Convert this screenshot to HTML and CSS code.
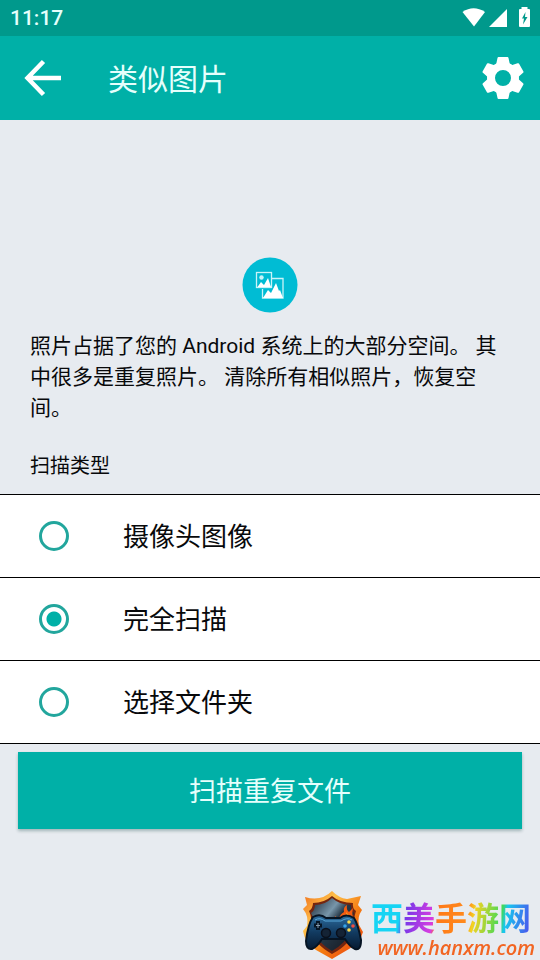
FILE: index.html
```html
<!DOCTYPE html>
<html lang="zh-CN">
    <head>
        <meta charset="utf-8">
        <meta name="viewport" content="width=device-width, initial-scale=1">
        <link rel="stylesheet" href="styles.css">

        <title>类似图片</title>
    </head>

    <body>
        <div class="status">
            <span>11:17</span>
            <svg class="status-icons" width="68" height="22" viewBox="0 0 68 22" fill="white">
                <path d="M0.500 5Q11.500-2.500 23 5L12 19.500Z"/>
                <path d="M45 2V20H27Z"/>
                <path fill-rule="evenodd" d="M59.500 0H65.500V2H67Q68 2 68 3V19Q68 20 67 20H58Q57 20 57 19V3Q57 2 58 2H59.500ZM63.500 5L60 11.500H62L61 17.500L65.500 10H63Z"/>
            </svg>
        </div>

        <header class="bar">
            <button class="icon-button" aria-label="返回">
                <svg width="38" height="38" viewBox="0 0 38 38" fill="none" stroke="white" stroke-width="4.500">
                    <path d="M37 19H5M19.500 2.500L3.500 19L19.500 35.500"/>
                </svg>
            </button>
            <h1 class="title">类似图片</h1>
            <button class="icon-button" aria-label="设置">
                <svg width="42" height="42" viewBox="0 0 42 42" fill="white">
                    <defs>
                        <path id="tooth" d="M14 8L15.500 1Q15.700 0 16.500 0H25.500Q26.300 0 26.500 1L28 8Z"/>
                    </defs>
                    <circle cx="21" cy="21" r="12" fill="none" stroke="white" stroke-width="8"/>
                    <use href="#tooth"/>
                    <use href="#tooth" transform="rotate(60 21 21)"/>
                    <use href="#tooth" transform="rotate(120 21 21)"/>
                    <use href="#tooth" transform="rotate(180 21 21)"/>
                    <use href="#tooth" transform="rotate(240 21 21)"/>
                    <use href="#tooth" transform="rotate(300 21 21)"/>
                </svg>
            </button>
        </header>

        <main>
            <section class="intro">
                <svg class="photos" width="56" height="56" viewBox="0 0 56 56">
                    <circle cx="28" cy="28" r="27.500" fill="#00bcd4"/>
                    <path d="M30 21.500H41V41H20.500V32" fill="none" stroke="#c9f3f8" stroke-width="1.300"/>
                    <path d="M21 41L26 33L29 36L34 26L37 34L38 33L41 41Z" fill="white"/>
                    <rect x="14.500" y="15.500" width="15" height="15" fill="#00bcd4" stroke="#c9f3f8" stroke-width="1.300"/>
                    <circle cx="19.500" cy="20.500" r="2.200" fill="#c9f3f8"/>
                    <path d="M15.500 30L19 25L22 28L26 21L29 30Z" fill="white"/>
                </svg>
                <p class="text">照片占据了您的 Android 系统上的大部分空间。 其中很多是重复照片。 清除所有相似照片，恢复空间。</p>
            </section>

            <form>
                <fieldset class="types">
                    <legend class="label">扫描类型</legend>
                    <label class="option"><input type="radio" name="type"><span>摄像头图像</span></label>
                    <label class="option"><input type="radio" name="type" checked><span>完全扫描</span></label>
                    <label class="option"><input type="radio" name="type"><span>选择文件夹</span></label>
                </fieldset>
                <button type="button" class="scan">扫描重复文件</button>
            </form>
        </main>

        <div class="watermark">
            <svg width="64" height="70" viewBox="0 0 64 70">
                <defs>
                    <linearGradient id="fire" x1="0" y1="0" x2="1" y2="1">
                        <stop offset="0" stop-color="#ef6a16"/>
                        <stop offset=".3" stop-color="#ffc04a"/>
                        <stop offset=".6" stop-color="#f47b12"/>
                        <stop offset="1" stop-color="#e83b10"/>
                    </linearGradient>
                    <linearGradient id="steel" x1="0" y1="0" x2="1" y2="1">
                        <stop offset="0" stop-color="#172331"/>
                        <stop offset=".35" stop-color="#7896aa"/>
                        <stop offset=".5" stop-color="#263746"/>
                        <stop offset="1" stop-color="#14171e"/>
                    </linearGradient>
                    <linearGradient id="pad" x1="0" y1="0" x2="0" y2="1">
                        <stop offset="0" stop-color="#2d6c9d"/>
                        <stop offset=".5" stop-color="#123b61"/>
                        <stop offset="1" stop-color="#071a31"/>
                    </linearGradient>
                </defs>
                <path d="M31 1Q38 8 46 9L60 6L57 15L61 20Q56 27 58 35L62 42Q59 53 48 59L31 69L15 60Q4 53 2 41L6 36Q8 26 2 19L6 15L4 7Q20 12 31 1Z" fill="url(#fire)"/>
                <path d="M31 6Q39 13 52 13Q51 18 55 21Q52 29 54 39Q50 54 31 64Q13 54 9 39Q12 29 8 21Q12 18 12 13Q23 13 31 6Z" fill="#74250f"/>
                <path d="M31 8Q39 15 50 15Q49 20 53 23Q49 31 51 40Q45 53 31 61Q17 53 12 40Q15 31 10 23Q14 20 14 15Q24 15 31 8Z" fill="url(#steel)"/>
                <path d="M29 34Q35 31 34 26L38 29Q39 24 43 22Q42 17 46 15Q45 20 48 22L52 18Q50 27 54 29Q49 36 49 44L31 43Z" fill="#f25c12"/>
                <path d="M34 36Q40 33 39 28L43 30Q47 27 45 22Q52 28 48 39Z" fill="#ffb62b"/>
                <path d="M12 27Q19 23 25 28H39Q45 23 53 28Q57 34 60 50Q60 61 54 59Q49 57 44 49H21Q16 57 11 59Q5 60 5 51Q7 34 12 27Z" fill="url(#pad)" stroke="#061423" stroke-width="2"/>
                <path d="M14 30Q19 27 24 31H40Q46 27 51 30" fill="none" stroke="#58a6d7"/>
                <path d="M17 31V40M13 35.500H21" stroke="#061525" stroke-width="4"/>
                <path d="M17 33V38M15 35.500H19" stroke="#849aae"/>
                <circle cx="25" cy="43" r="4.500" fill="#142335" stroke="#0a101c" stroke-width="1.500"/>
                <circle cx="40" cy="43" r="4.500" fill="#142335" stroke="#0a101c" stroke-width="1.500"/>
                <circle cx="48" cy="32" r="1.800" fill="#ffdc4b"/>
                <circle cx="44" cy="36" r="1.800" fill="#36a5e9"/>
                <circle cx="52" cy="36" r="1.800" fill="#f04d41"/>
                <circle cx="48" cy="40" r="1.800" fill="#ffdc4b"/>
            </svg>
            <div class="site">
                <strong class="site-name">西美手游网</strong>
                <span class="site-url">www.hanxm.com</span>
            </div>
        </div>
    </body>
</html>
```
FILE: styles.css
```css
* {
    box-sizing: border-box;
}

body {
    margin: 0;
    min-height: 100vh;
    background-color: #e7ebf0;
    color: #08090b;
    font-family: Roboto, "Noto Sans CJK SC", sans-serif;
}

.status {
    display: flex;
    justify-content: space-between;
    align-items: center;
    height: 36px;
    padding: 0 10px;
    background-color: #00998c;
    color: #e5fffc;
    font-size: 21px;
    font-weight: 500;
}

.bar {
    display: flex;
    align-items: center;
    height: 84px;
    padding: 0 16px 0 24px;
    background-color: #00b0a7;
    color: #e5fffc;
}

.title {
    flex: 1;
    margin: 0 0 0 46px;
    padding-bottom: 2px;
    font-size: 30px;
    font-weight: 400;
}

button {
    border: none;
    font-family: inherit;
    cursor: pointer;
}

.icon-button {
    display: flex;
    padding: 0;
    background: none;
}

.intro {
    padding: 137px 30px 0;
}

.photos {
    display: block;
    margin: 0 auto;
}

.text {
    margin: 18px 0 0;
    font-size: 21px;
    line-height: 31px;
}

.types {
    margin: 0;
    padding: 0;
    border: none;
}

.label {
    padding: 27px 30px 13px;
    font-size: 20px;
    line-height: 30px;
}

.option {
    display: flex;
    align-items: center;
    gap: 54px;
    height: 83px;
    padding: 0 39px;
    border-top: 1px solid black;
    background-color: white;
    font-size: 26px;
}

.option:last-child {
    height: 84px;
    border-bottom: 1px solid black;
}

.option span {
    padding-bottom: 4px;
}

.option input {
    appearance: none;
    width: 30px;
    height: 30px;
    margin: 0;
    border: 3px solid #22a69d;
    border-radius: 50%;
}

.option input:checked {
    background: radial-gradient(circle, #00b0a7 7px, transparent 8px);
}

.scan {
    display: block;
    width: calc(100% - 36px);
    height: 77px;
    margin: 8px 18px;
    padding: 0 0 2px;
    background-color: #00b0a7;
    box-shadow: 0 2px 3px rgba(0, 60, 55, 0.3);
    color: #e5fffc;
    font-size: 27px;
}

/* site badge in the corner, over the page */
.watermark {
    position: fixed;
    right: 5px;
    bottom: 0;
    display: flex;
    align-items: flex-end;
    gap: 6px;
}

.site {
    display: flex;
    flex-direction: column;
    align-items: flex-end;
}

.site-name {
    padding-right: 4px;
    background: linear-gradient(100deg, #16d4f4 18%, #7938e8 22%, #d83de0 38%, #ff7a18 41%, #ff8a1c 58%, #f4d321 62%, #42d957 78%, #18c7ef 81%, #5146ed 98%);
    background-clip: text;
    -webkit-background-clip: text;
    color: transparent;
    font-size: 32px;
    font-weight: 700;
    line-height: 34px;
}

.site-url {
    color: #f26522;
    font-family: "Open Sans", sans-serif;
    font-size: 20px;
    font-style: italic;
    font-weight: 600;
    line-height: 24px;
}
```
